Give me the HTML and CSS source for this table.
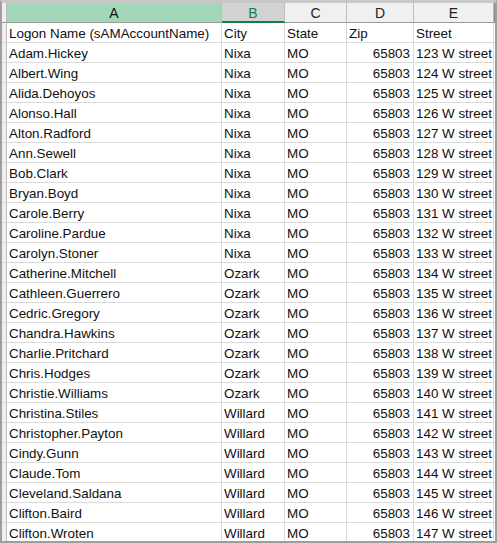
FILE: index.html
```html
<!DOCTYPE html>
<html>
<head>
<meta charset="utf-8">
<link rel="stylesheet" href="styles.css">
</head>
<body>
<div class="sheet">
  <div class="row head">
    <div class="rh"></div>
    <div class="ch sel">A</div>
    <div class="ch act">B</div>
    <div class="ch">C</div>
    <div class="ch">D</div>
    <div class="ch">E</div>
    <div class="fill"></div>
  </div>
  <div id="rows"></div>
</div>
<script src="app.js"></script>
</body>
</html>
```
FILE: app.js
```js
const data = [
  ["Logon Name (sAMAccountName)","City","State","Zip","Street"],
  ["Adam.Hickey","Nixa"],["Albert.Wing","Nixa"],["Alida.Dehoyos","Nixa"],["Alonso.Hall","Nixa"],
  ["Alton.Radford","Nixa"],["Ann.Sewell","Nixa"],["Bob.Clark","Nixa"],["Bryan.Boyd","Nixa"],
  ["Carole.Berry","Nixa"],["Caroline.Pardue","Nixa"],["Carolyn.Stoner","Nixa"],
  ["Catherine.Mitchell","Ozark"],["Cathleen.Guerrero","Ozark"],["Cedric.Gregory","Ozark"],
  ["Chandra.Hawkins","Ozark"],["Charlie.Pritchard","Ozark"],["Chris.Hodges","Ozark"],
  ["Christie.Williams","Ozark"],["Christina.Stiles","Willard"],["Christopher.Payton","Willard"],
  ["Cindy.Gunn","Willard"],["Claude.Tom","Willard"],["Cleveland.Saldana","Willard"],
  ["Clifton.Baird","Willard"],["Clifton.Wroten","Willard"]
];
const host = document.getElementById("rows");
data.forEach((r, i) => {
  const row = document.createElement("div");
  row.className = "row";
  let cells;
  if (i === 0) {
    cells = r.map(t => ({t, c: ""}));
  } else {
    cells = [
      {t: r[0], c: ""}, {t: r[1], c: ""}, {t: "MO", c: ""},
      {t: "65803", c: "num"}, {t: (122 + i) + " W street", c: ""}
    ];
  }
  let html = '<div class="rh"></div>';
  cells.forEach(x => { html += '<div class="cell ' + x.c + '">' + x.t + '</div>'; });
  html += '<div class="fill"></div>';
  row.innerHTML = html;
  host.appendChild(row);
});
```
FILE: styles.css
```css
html, body {
  margin: 0;
  padding: 0;
  background: #ffffff;
}
.sheet {
  width: 497px;
  height: 543px;
  box-sizing: border-box;
  border-left: 2px solid #9e9e9e;
  border-right: 2px solid #9e9e9e;
  border-top: 3px solid #c8c8c8;
  border-bottom: 2px solid #9e9e9e;
  overflow: hidden;
  font-family: "Liberation Sans", Arial, sans-serif;
  font-size: 13.4px;
  color: #111;
}
.row {
  display: grid;
  grid-template-columns: 5px 215px 63px 62px 67px 80px 1fr;
  height: 20px;
}
.row > div {
  box-sizing: border-box;
  border-right: 1px solid #dadada;
  border-bottom: 1px solid #dadada;
  line-height: 21px;
  white-space: nowrap;
  overflow: hidden;
}
.rh {
  background: #f0f0f0;
  border-right: 1px solid #bdbdbd !important;
  border-bottom: 1px solid #dadada !important;
}
.fill {
  border-right: none !important;
  background: #fff;
}
.cell {
  padding-left: 2px;
}
.cell.num {
  text-align: right;
  padding-right: 3px;
  padding-left: 0;
}
.head > div {
  background: #f0f0f0;
  border-right: 1px solid #bdbdbd;
  border-bottom: 1px solid #9a9a9a;
  font-size: 14px;
  line-height: 20px;
}
.head .rh {
  border-bottom: 1px solid #9a9a9a !important;
}
.ch {
  text-align: center;
  color: #222;
}
.ch.sel {
  background: #a0d8b9;
  color: #111;
}
.ch.act {
  background: #d2d2d2;
  color: #137e43;
  border-bottom: 2px solid #137e43 !important;
}
.head .fill {
  background: #f0f0f0;
  border-left: 1px solid #8a8a8a;
}
```
